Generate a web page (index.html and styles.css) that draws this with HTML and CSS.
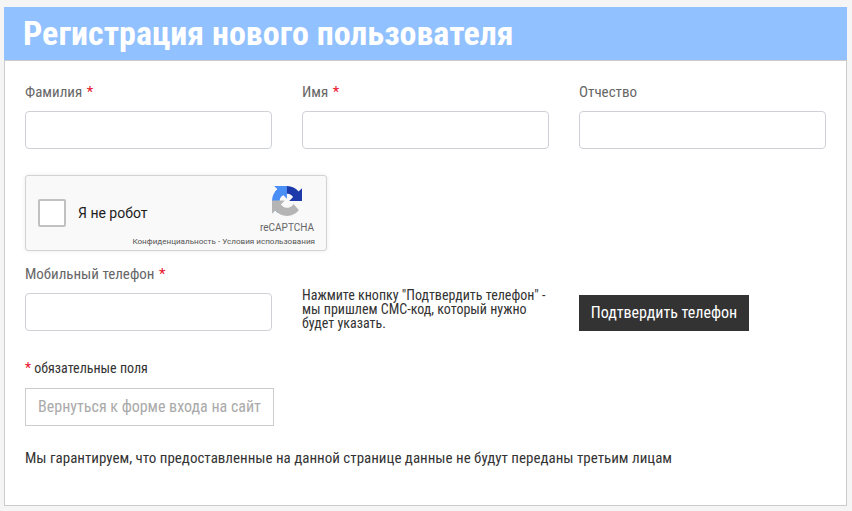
FILE: index.html
```html
<!DOCTYPE html>
<html lang="ru">
<head>
<meta charset="utf-8">
<title>Регистрация нового пользователя</title>
<link rel="stylesheet" href="styles.css">
</head>
<body>
<main class="panel">
  <h1 class="title"><span class="cond">Регистрация нового пользователя</span></h1>
  <form class="body">
    <div class="row">
      <div class="field"><label class="label"><span class="cond">Фамилия <b class="req">*</b></span></label><input class="input" type="text"></div>
      <div class="field"><label class="label"><span class="cond">Имя <b class="req">*</b></span></label><input class="input" type="text"></div>
      <div class="field"><label class="label"><span class="cond">Отчество</span></label><input class="input" type="text"></div>
    </div>
    <div class="captcha">
      <span class="check"></span>
      <span class="robot">Я не робот</span>
      <div class="brand">
        <svg class="logo" viewBox="0 0 64 64" width="30" height="30" aria-hidden="true">
          <path fill="#1c3aa9" d="M64 31.955l-.033-1.37V4.687l-7.160 7.160C50.948 4.674 42.033.093 32.050.093c-10.400 0-19.622 4.960-25.458 12.640l11.736 11.860a15.550 15.550 0 0 1 4.754-5.334c2.050-1.600 4.952-2.906 8.968-2.906.485 0 .860.057 1.135.163 4.976.393 9.288 3.140 11.828 7.124l-8.307 8.307 26.300.001"/>
          <path fill="#4a8ff5" d="M31.862.001l-1.370.033H4.594l7.160 7.160C4.580 13.053 0 21.968 0 31.950c0 10.400 4.960 19.622 12.640 25.458L24.500 45.672a15.550 15.550 0 0 1-5.334-4.754c-1.600-2.050-2.906-4.952-2.906-8.968 0-.485.057-.860.163-1.135.393-4.976 3.140-9.288 7.124-11.828l8.307 8.307.001-26.300"/>
          <path fill="#b5b5b5" d="M.001 31.950l.033 1.370v25.898l7.160-7.160c5.860 7.173 14.775 11.754 24.757 11.754 10.400 0 19.622-4.960 25.458-12.640L45.673 38.300a15.550 15.550 0 0 1-4.754 5.334c-2.050 1.600-4.952 2.906-8.968 2.906-.485 0-.860-.057-1.135-.163-4.976-.393-9.288-3.140-11.828-7.124l8.307-8.307-26.300-.001"/>
        </svg>
        <span class="recaptcha">reCAPTCHA</span>
      </div>
      <span class="legal">Конфиденциальность - Условия использования</span>
    </div>
    <div class="row phone-row">
      <div class="field"><label class="label"><span class="cond">Мобильный телефон <b class="req">*</b></span></label><input class="input" type="text"></div>
      <p class="hint"><span class="cond">Нажмите кнопку "Подтвердить телефон" - мы пришлем СМС-код, который нужно будет указать.</span></p>
      <div class="confirm-cell"><button class="confirm" type="button"><span class="cond">Подтвердить телефон</span></button></div>
    </div>
    <p class="note"><span class="cond"><b class="req">*</b> обязательные поля</span></p>
    <a class="back" href="#"><span class="cond">Вернуться к форме входа на сайт</span></a>
    <p class="guarantee"><span class="cond">Мы гарантируем, что предоставленные на данной странице данные не будут переданы третьим лицам</span></p>
  </form>
</main>
</body>
</html>
```
FILE: styles.css
```css
* { box-sizing: border-box; }
html, body { margin: 0; }
body {
  height: 511px;
  overflow: hidden;
  background: #f5f5f5;
  padding: 7px 4px 0;
  font-family: Roboto, "Liberation Sans", sans-serif;
  color: #333;
}
.cond { font-stretch: 75%; }
.panel { width: 843px; }
.title {
  margin: 0;
  height: 53px;
  background: #92c1ff;
  color: #fff;
  font-size: 34px;
  font-weight: 700;
  line-height: 52px;
  padding-left: 19px;
}
.body {
  height: 446px;
  background: #fff;
  border: 1px solid #ccc;
  padding: 22px 20px 0;
}
.row { display: grid; grid-template-columns: repeat(3, 247px); column-gap: 30px; }
.label { display: block; height: 28px; font-size: 15px; line-height: 18px; color: #666; }
.req { color: #e8112d; font-weight: 400; margin-left: 1px; }
.note .req { margin-left: 0; }
.input {
  display: block;
  width: 247px;
  height: 38px;
  border: 1px solid #ced1d6;
  border-radius: 4px;
  background: #fff;
}
.captcha {
  position: relative;
  width: 302px;
  height: 76px;
  margin-top: 26px;
  padding-left: 12px;
  display: flex;
  align-items: center;
  background: #f9f9f9;
  border: 1px solid #d3d3d3;
  border-radius: 3px;
  box-shadow: 0 0 4px rgba(0, 0, 0, .08);
}
.check {
  width: 28px;
  height: 28px;
  background: #fff;
  border: 2px solid #c1c1c1;
  border-radius: 2px;
  flex: none;
}
.robot { margin-left: 12px; font-size: 14px; color: #222; }
.brand {
  position: absolute;
  top: 10px;
  right: 12px;
  display: flex;
  flex-direction: column;
  align-items: center;
  width: 54px;
}
.logo { display: block; }
.recaptcha { margin-top: 6px; font: 10px/12px Roboto, sans-serif; color: #666; }
.legal {
  position: absolute;
  right: 11px;
  bottom: 4px;
  font-size: 8.1px;
  line-height: 10px;
  color: #555;
  white-space: nowrap;
}
.phone-row { margin-top: 14px; }
.hint {
  margin: 0;
  align-self: end;
  padding-bottom: 1px;
  font-size: 14px;
  line-height: 14px;
  color: #333;
}
.confirm-cell { align-self: end; }
.confirm {
  display: block;
  width: 170px;
  height: 36px;
  padding: 0;
  border: 0;
  background: #333;
  color: #fff;
  font: 450 16px/36px Roboto, sans-serif;
}
.note { margin: 28px 0 0; font-size: 14px; line-height: 18px; color: #333; }
.back {
  display: block;
  width: 249px;
  height: 38px;
  margin-top: 11px;
  border: 1px solid #ccc;
  text-align: center;
  font-size: 16px;
  line-height: 36px;
  color: #aaa;
  text-decoration: none;
  white-space: nowrap;
}
.guarantee { margin: 23px 0 0; font-size: 15px; line-height: 18px; color: #333; white-space: nowrap; }
```
